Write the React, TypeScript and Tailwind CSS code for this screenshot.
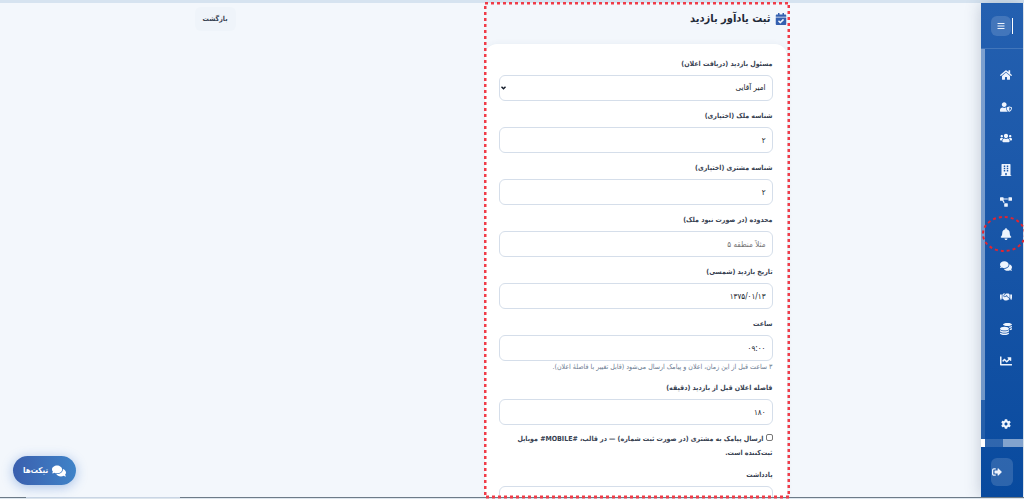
import type { ReactNode } from 'react';
import type { IconType } from 'react-icons';
import {
  FaBars,
  FaBell,
  FaBuilding,
  FaCalendarCheck,
  FaChartLine,
  FaCog,
  FaCoins,
  FaComments,
  FaHandshake,
  FaHome,
  FaProjectDiagram,
  FaSignOutAlt,
  FaUsers,
  FaUserShield,
} from 'react-icons/fa';

const NAV_ITEMS: { label: string; icon: IconType; marked?: boolean }[] = [
  { label: 'خانه', icon: FaHome },
  { label: 'مدیران', icon: FaUserShield },
  { label: 'مشتریان', icon: FaUsers },
  { label: 'املاک', icon: FaBuilding },
  { label: 'فرآیندها', icon: FaProjectDiagram },
  { label: 'یادآورها', icon: FaBell, marked: true },
  { label: 'گفتگو', icon: FaComments },
  { label: 'قراردادها', icon: FaHandshake },
  { label: 'مالی', icon: FaCoins },
  { label: 'گزارش‌ها', icon: FaChartLine },
];

const CONTROL_CLASSES =
  'block w-full h-[26px] px-[6px] rounded-md border border-[#d5deea] bg-white text-[8px] text-[#111827] placeholder:text-[#757575] outline-none';

interface FieldProps {
  id: string;
  label: string;
  help?: string;
  children: ReactNode;
}

function Field({ id, label, help, children }: FieldProps) {
  return (
    <div className="mb-[7px]">
      <label htmlFor={id} className="block mb-[3px] text-[7px] leading-4 font-bold text-[#374151]">
        {label}
      </label>
      {children}
      {help && <p className="text-[7px] leading-3 text-[#6b7a90] whitespace-nowrap">{help}</p>}
    </div>
  );
}

function Sidebar() {
  return (
    <aside className="w-[42px] ms-px shrink-0 flex flex-col bg-linear-to-b from-[#2460b0] to-[#084a9e] text-[#eef4fd] shadow-[0_0_16px_rgba(30,60,90,0.25)]">
      {/* Toggle */}
      <div className="h-[46px] shrink-0 flex items-center justify-center gap-px border-b border-white/15">
        <span className="w-px h-4 bg-white" />
        <button type="button" aria-label="منو" className="size-5 rounded-md bg-white/15 flex items-center justify-center">
          <FaBars className="size-2" />
        </button>
      </div>

      {/* Links, with the scroll bars of the panel */}
      <div className="flex-1 min-h-0 flex">
        <div className="flex-1 flex flex-col items-center pl-1 pt-[10px]">
          <nav className="h-[318px] flex flex-col">
            {NAV_ITEMS.map(({ label, icon: Icon, marked }) => (
              <a key={label} href="#" aria-label={label} className="relative flex-1 flex items-center justify-center">
                <Icon className="size-3" />
                {marked && (
                  <svg className="absolute -left-4 -top-[3px] w-[44px] h-[38px] overflow-visible" viewBox="0 0 44 38">
                    <ellipse cx="20" cy="19" rx="21" ry="17" fill="none" stroke="#e3242f" strokeWidth="2" strokeDasharray="3 3" />
                  </svg>
                )}
              </a>
            ))}
          </nav>
          <a href="#" aria-label="تنظیمات" className="mt-auto mb-[10px]">
            <FaCog className="size-[10px]" />
          </a>
        </div>
        <div className="w-1 bg-white/10">
          <div className="h-[90%] bg-white/35" />
        </div>
      </div>
      <div className="h-2 shrink-0 flex bg-white/15">
        <div className="w-5 bg-white/40" />
        <div className="flex-1" />
        <div className="w-1 bg-white" />
      </div>

      {/* Logout */}
      <div className="h-[50px] shrink-0 flex items-center justify-center">
        <button type="button" aria-label="خروج" className="w-[22px] h-7 rounded-md bg-white/15 flex items-center justify-end pe-px">
          <FaSignOutAlt className="size-[10px]" />
        </button>
      </div>
    </aside>
  );
}

function ReminderForm() {
  return (
    <form className="w-[302px] px-[14px] pt-3 rounded-xl bg-white shadow-[0_0_6px_rgba(30,60,100,0.06)]">
      <Field id="agent" label="مسئول بازدید (دریافت اعلان)">
        <div className="relative">
          <select id="agent" className={`${CONTROL_CLASSES} appearance-none`}>
            <option>امیر آقایی</option>
          </select>
          <svg className="absolute left-[2px] top-[11px] w-[5px] h-1 pointer-events-none" viewBox="0 0 5 4">
            <path d="M0.5 0.8 2.5 2.8 4.5 0.8" fill="none" stroke="#111827" strokeWidth="1.4" />
          </svg>
        </div>
      </Field>
      <Field id="property" label="شناسه ملک (اختیاری)">
        <input id="property" defaultValue="۲" className={CONTROL_CLASSES} />
      </Field>
      <Field id="customer" label="شناسه مشتری (اختیاری)">
        <input id="customer" defaultValue="۲" className={CONTROL_CLASSES} />
      </Field>
      <Field id="area" label="محدوده (در صورت نبود ملک)">
        <input id="area" placeholder="مثلاً منطقه ۵" className={CONTROL_CLASSES} />
      </Field>
      <Field id="date" label="تاریخ بازدید (شمسی)">
        <input id="date" dir="ltr" defaultValue="۱۳۷۵/۰۱/۱۳" className={`${CONTROL_CLASSES} text-right`} />
      </Field>
      <Field
        id="time"
        label="ساعت"
        help="۳ ساعت قبل از این زمان، اعلان و پیامک ارسال می‌شود (قابل تغییر با فاصلهٔ اعلان)."
      >
        <input id="time" dir="ltr" defaultValue="۰۹:۰۰" className={`${CONTROL_CLASSES} text-right`} />
      </Field>
      <Field id="lead" label="فاصله اعلان قبل از بازدید (دقیقه)">
        <input id="lead" defaultValue="۱۸۰" className={CONTROL_CLASSES} />
      </Field>
      <label className="block mb-[7px] text-[7px] leading-[14px] font-bold text-[#374151]">
        <input
          type="checkbox"
          className="appearance-none size-[7px] ms-0 me-[2px] rounded-[2px] border border-[#767676] bg-white"
        />
        ارسال پیامک به مشتری (در صورت ثبت شماره) — در قالب، #MOBILE# موبایل ثبت‌کننده است.
      </label>
      <Field id="note" label="یادداشت">
        <textarea id="note" className={`${CONTROL_CLASSES} resize-none`} />
      </Field>
    </form>
  );
}

export default function App() {
  return (
    <div
      dir="rtl"
      className="relative h-screen overflow-hidden flex flex-col bg-[#f3f7fc] font-['DejaVu_Sans_Condensed','DejaVu_Sans',sans-serif]"
    >
      <div className="h-[3px] shrink-0 bg-[#d6e3f0]" />
      <div className="flex-1 min-h-0 flex">
        <Sidebar />
        <main className="flex-1 min-w-0 overflow-hidden">
          <div className="w-[592px] max-w-full mx-auto">
            <header className="h-[41px] flex items-start justify-between pt-1">
              <h1 className="h-6 flex items-center gap-1 text-[11px] font-bold text-[#1f2937]">
                <FaCalendarCheck className="size-3 text-[#3560b0]" />
                ثبت یادآور بازدید
              </h1>
              <a
                href="#"
                className="h-6 px-2 flex items-center rounded-md bg-[#eff4fa] text-[7px] font-bold text-[#374151]"
              >
                بازگشت
              </a>
            </header>
            <ReminderForm />
          </div>
        </main>
      </div>
      <div className="h-[2px] shrink-0 flex flex-col bg-[#dde6ee]">
        <div dir="ltr" className="h-px flex bg-[#6d7b88]">
          <div className="w-[26px]" />
          <div className="w-[154px] bg-[#c9d5e4]" />
        </div>
      </div>

      {/* Dotted frame round the form column */}
      <svg className="absolute left-[484px] top-[2px] w-[306px] h-[497px] pointer-events-none">
        <rect x="1" y="1" width="304" height="494" fill="none" stroke="#f03c48" strokeWidth="3" strokeDasharray="3 3" />
      </svg>

      <button
        type="button"
        className="absolute left-[13px] bottom-[14px] w-[63px] h-[29px] rounded-full bg-linear-to-r from-[#3a5fae] to-[#3f83c8] text-white text-[8px] font-bold flex items-center justify-center gap-1 shadow-[0_2px_12px_rgba(50,110,200,0.4)]"
      >
        <FaComments className="size-[14px]" />
        تیکت‌ها
      </button>
    </div>
  );
}
